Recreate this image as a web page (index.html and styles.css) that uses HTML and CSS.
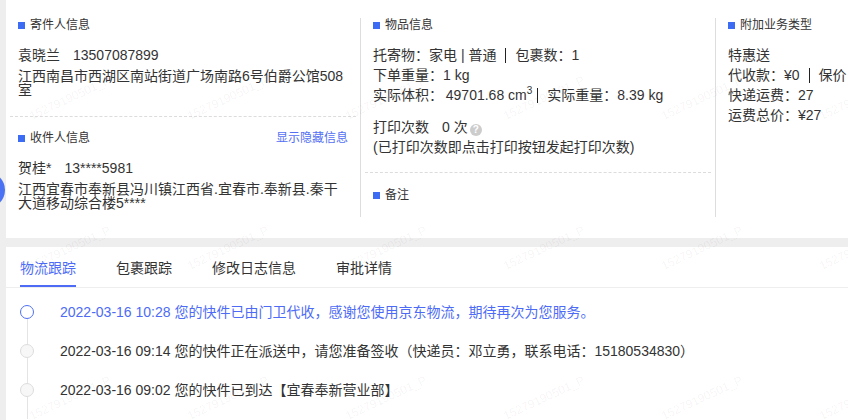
FILE: index.html
```html
<!DOCTYPE html>
<html lang="zh-CN">
<head>
<meta charset="utf-8">
<title>运单详情</title>
<link rel="stylesheet" href="styles.css">
</head>
<body>
<div class="page">
  <section class="info">
    <div class="col col-left">
      <div class="block">
        <div class="title"><i class="sq"></i>寄件人信息</div>
        <div class="person"><span>袁晓兰</span><span class="phone">13507087899</span></div>
        <div class="addr">江西南昌市西湖区南站街道广场南路6号伯爵公馆508室</div>
      </div>
      <div class="dash"></div>
      <div class="block recv">
        <div class="title-row">
          <div class="title"><i class="sq"></i>收件人信息</div>
          <a class="link">显示隐藏信息</a>
        </div>
        <div class="person"><span>贺桂*</span><span class="phone">13****5981</span></div>
        <div class="addr">江西宜春市奉新县冯川镇江西省.宜春市.奉新县.秦干大道移动综合楼5****</div>
      </div>
    </div>
    <div class="col col-mid">
      <div class="block">
        <div class="title"><i class="sq"></i>物品信息</div>
        <div class="rows">
          <div>托寄物：家电 | 普通<i class="sep"></i>包裹数：1</div>
          <div>下单重量：1 kg</div>
          <div>实际体积：&#8201;49701.68 cm<sup>3</sup><i class="sep sep-l"></i>实际重量：8.39 kg</div>
        </div>
        <div class="rows print">
          <div>打印次数<span class="count">0 次</span><span class="help">?</span></div>
          <div>(已打印次数即点击打印按钮发起打印次数)</div>
        </div>
      </div>
      <div class="dash dash-mid"></div>
      <div class="block note">
        <div class="title"><i class="sq"></i>备注</div>
      </div>
    </div>
    <div class="col col-right">
      <div class="block">
        <div class="title"><i class="sq"></i>附加业务类型</div>
        <div class="rows">
          <div>特惠送</div>
          <div>代收款：¥0<i class="sep"></i>保价：¥0</div>
          <div>快递运费：27</div>
          <div>运费总价：¥27</div>
        </div>
      </div>
    </div>
  </section>

  <section class="track">
    <div class="tabs">
      <div class="tab active">物流跟踪</div>
      <div class="tab">包裹跟踪</div>
      <div class="tab">修改日志信息</div>
      <div class="tab">审批详情</div>
    </div>
    <div class="timeline">
      <div class="item first">
        <div class="rail"><i class="seg-top"></i><i class="dot on"></i><i class="seg-bot"></i></div>
        <div class="text on">2022-03-16 10:28 您的快件已由门卫代收，感谢您使用京东物流，期待再次为您服务。</div>
      </div>
      <div class="item">
        <div class="rail"><i class="seg-top"></i><i class="dot"></i><i class="seg-bot"></i></div>
        <div class="text">2022-03-16 09:14 您的快件正在派送中，请您准备签收（快递员：邓立勇，联系电话：15180534830）</div>
      </div>
      <div class="item">
        <div class="rail"><i class="seg-top"></i><i class="dot"></i><i class="seg-bot"></i></div>
        <div class="text">2022-03-16 09:02 您的快件已到达【宜春奉新营业部】</div>
      </div>
    </div>
  </section>
</div>

<div class="fab"></div>

<div class="wm">
  <div class="wm-row r1"><span>15279190501_P</span><span>15279190501_P</span><span>15279190501_P</span><span>15279190501_P</span><span>15279190501_P</span><span>15279190501_P</span></div>
  <div class="wm-row r2"><span>15279190501_P</span><span>15279190501_P</span><span>15279190501_P</span><span>15279190501_P</span><span>15279190501_P</span><span>15279190501_P</span></div>
  <div class="wm-row r3"><span>15279190501_P</span><span>15279190501_P</span><span>15279190501_P</span><span>15279190501_P</span><span>15279190501_P</span><span>15279190501_P</span></div>
</div>
</body>
</html>
```
FILE: styles.css
```css
* { box-sizing: border-box; }
body {
  margin: 0;
  width: 848px;
  height: 420px;
  overflow: hidden;
  position: relative;
  background: #eeeeee;
  font-family: "Liberation Sans", "Noto Sans CJK SC", sans-serif;
  color: #333;
}
i { font-style: normal; }
.page {
  padding-left: 6px;
  display: flex;
  flex-direction: column;
  gap: 9px;
  height: 420px;
}
.info {
  background: #fff;
  height: 238px;
  flex: none;
  display: flex;
  padding-top: 18px;
}
.col {
  height: 199px;
  padding: 0 4px;
}
.col-left { width: 354px; flex: none; }
.col-mid { width: 355px; flex: none; border-left: 1px solid #dddddd; }
.col-right { flex: 1; border-left: 1px solid #dddddd; white-space: nowrap; min-width: 0; }
.block { padding: 0 8px; }
.title {
  font-size: 12px;
  line-height: 14px;
  display: flex;
  align-items: center;
  color: #333;
}
.sq {
  width: 7px;
  height: 7px;
  background: #3d6cf4;
  margin-right: 5px;
}
.title-row {
  display: flex;
  justify-content: space-between;
  align-items: center;
}
.link {
  font-size: 12px;
  line-height: 14px;
  color: #5470f2;
}
.person {
  margin-top: 13px;
  font-size: 14px;
  line-height: 20px;
}
.phone { margin-left: 13px; }
.addr {
  margin-top: 4px;
  font-size: 14px;
  line-height: 14px;
}
.dash {
  border-top: 1px dashed #dcdcdc;
  margin-top: 19px;
}
.recv { margin-top: 14px; }
.rows {
  margin-top: 13px;
  font-size: 14px;
  line-height: 20px;
}
.rows sup {
  font-size: 10px;
  line-height: 0;
  vertical-align: 6px;
}
.print { margin-top: 12px; }
.count { margin-left: 13px; }
.help {
  display: inline-block;
  width: 12px;
  height: 12px;
  border-radius: 50%;
  background: #cccccc;
  color: #fff;
  font-size: 10px;
  font-weight: bold;
  line-height: 12px;
  text-align: center;
  margin-left: 2px;
  vertical-align: -1px;
}
.sep {
  display: inline-block;
  width: 1px;
  height: 15px;
  background: #222;
  margin: 0 9px;
  vertical-align: -3px;
}
.sep-l { margin-left: 5px; }
.dash-mid { margin-top: 15px; }
.note { margin-top: 15px; }

.track {
  background: #fff;
  flex: 1;
}
.tabs {
  display: flex;
  gap: 40px;
  padding-left: 14px;
  border-bottom: 1px solid #eeeeee;
}
.tab {
  font-size: 14px;
  line-height: 20px;
  padding: 11px 0 7px;
  border-bottom: 2px solid transparent;
  color: #333;
}
.tab.active {
  color: #4d6bf5;
  border-bottom-color: #4d6bf5;
}
.timeline {
  padding: 14px 0 0 14px;
}
.item {
  display: flex;
  height: 39px;
}
.rail {
  width: 14px;
  flex: none;
  display: flex;
  flex-direction: column;
  align-items: center;
}
.seg-top {
  width: 1px;
  height: 3px;
  background: #e4e4e4;
}
.first .seg-top { background: transparent; }
.seg-bot {
  width: 1px;
  flex: 1;
  background: #e4e4e4;
}
.dot {
  width: 14px;
  height: 14px;
  border-radius: 50%;
  border: 1px solid #dddddd;
  background: #f7f7f7;
  flex: none;
}
.dot.on {
  border: 1.5px solid #5070f2;
  background: #fff;
}
.text {
  margin-left: 26px;
  font-size: 14px;
  line-height: 20px;
  white-space: nowrap;
  color: #333;
}
.text.on { color: #4d6bf5; }

.fab {
  position: absolute;
  left: -31px;
  top: 172px;
  width: 36px;
  height: 36px;
  border-radius: 50%;
  background: #4a72f3;
}

.wm {
  position: absolute;
  inset: 0;
  pointer-events: none;
  overflow: hidden;
}
.wm-row {
  position: absolute;
  left: -9px;
  display: flex;
}
.wm-row.r1 { top: 88px; }
.wm-row.r2 { top: 238px; }
.wm-row.r3 { top: 388px; }
.wm-row span {
  flex: none;
  width: 158px;
  text-align: center;
  font-size: 12px;
  line-height: 20px;
  color: rgba(0, 0, 0, 0.05);
  transform: rotate(-25deg);
}
```
